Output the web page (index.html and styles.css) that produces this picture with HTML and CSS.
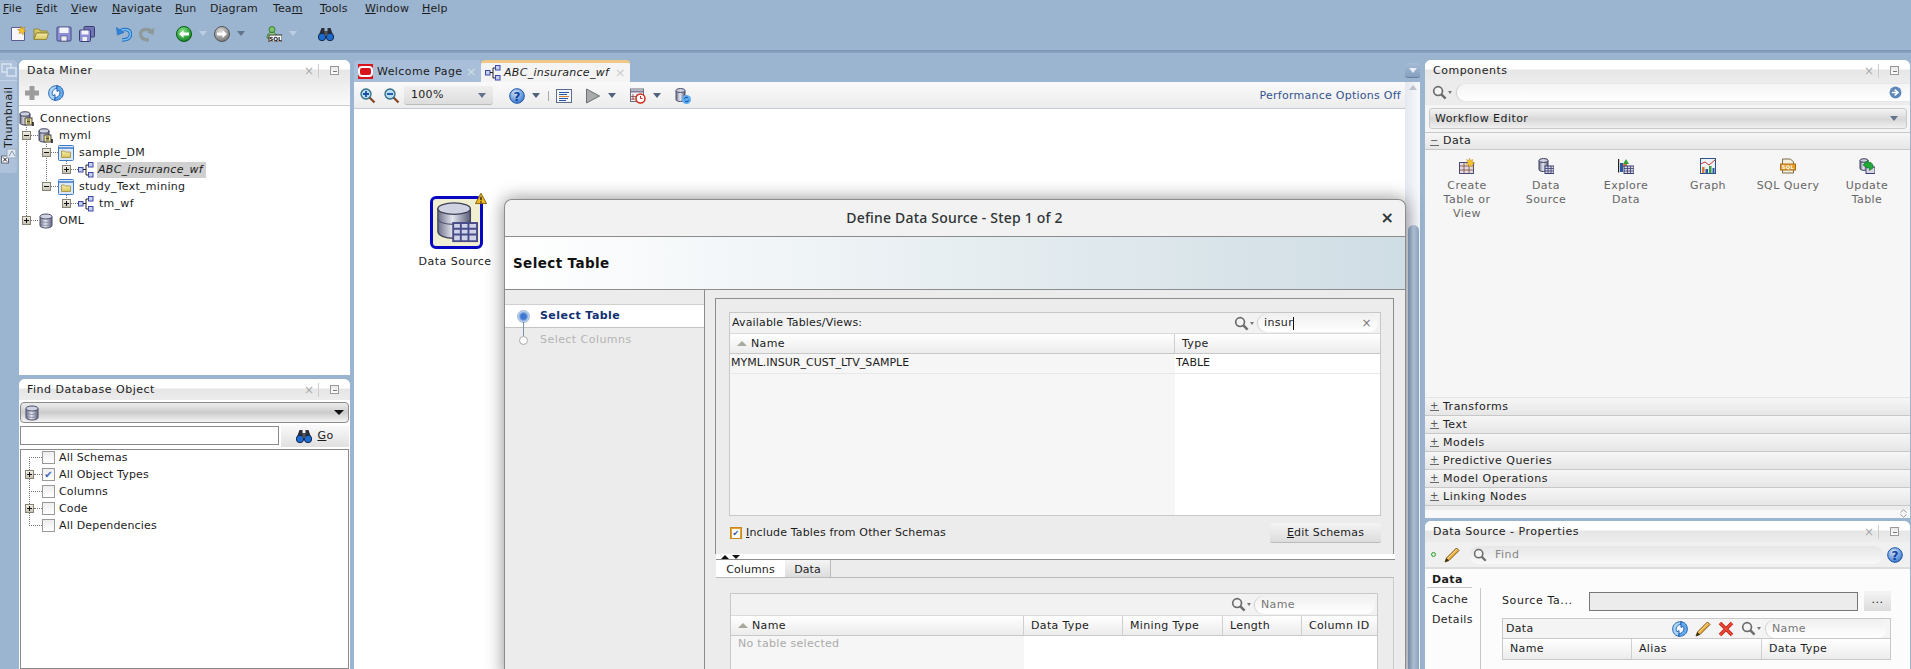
FILE: index.html
```html
<!DOCTYPE html>
<html lang="en">
<head>
<meta charset="utf-8">
<title>Oracle SQL Developer - Data Miner</title>
<link rel="stylesheet" href="styles.css">
</head>
<body>
<svg class="sprite" xmlns="http://www.w3.org/2000/svg">
  <defs>
    <linearGradient id="gDb" x1="0" x2="1" y1="0" y2="0"><stop offset="0" stop-color="#6c7088"/><stop offset=".45" stop-color="#e4e6ee"/><stop offset="1" stop-color="#5a5e78"/></linearGradient>
    <linearGradient id="gExp" x1="0" x2="0" y1="0" y2="1"><stop offset="0" stop-color="#f4f1e8"/><stop offset="1" stop-color="#c4c0b2"/></linearGradient>
    <radialGradient id="gGreen" cx=".4" cy=".3" r=".8"><stop offset="0" stop-color="#7fe07f"/><stop offset="1" stop-color="#0a7a1c"/></radialGradient>
    <radialGradient id="gGrey" cx=".4" cy=".3" r=".8"><stop offset="0" stop-color="#d8d8d8"/><stop offset="1" stop-color="#6c6c6c"/></radialGradient>
    <radialGradient id="gBlue" cx=".4" cy=".3" r=".8"><stop offset="0" stop-color="#cfe4fa"/><stop offset="1" stop-color="#2a6cc8"/></radialGradient>
    <linearGradient id="gFolder" x1="0" x2="0" y1="0" y2="1"><stop offset="0" stop-color="#f6ecaa"/><stop offset="1" stop-color="#d8c45c"/></linearGradient>
  </defs>
  <symbol id="db" viewBox="0 0 16 16"><path d="M2 3.500v9c0 1.600 2.700 2.500 6 2.500s6-.9 6-2.500v-9z" fill="url(#gDb)" stroke="#4a4e6c"/><ellipse cx="8" cy="3.500" rx="6" ry="2.500" fill="#cfd2e0" stroke="#4a4e6c"/><path d="M2 7c0 1.500 2.700 2.400 6 2.400S14 8.500 14 7M2 10c0 1.500 2.700 2.400 6 2.400s6-.9 6-2.400" fill="none" stroke="#7a7e98" stroke-width=".7"/></symbol>
  <symbol id="conn" viewBox="0 0 16 16"><path d="M1 3v9c0 1.300 2.200 2 5 2s5-.7 5-2V3z" fill="url(#gDb)" stroke="#3a3e58"/><ellipse cx="6" cy="3" rx="5" ry="2.200" fill="#cfd2e0" stroke="#3a3e58"/><rect x="6" y="7" width="7" height="7" fill="#efe39a" stroke="#444"/><path d="M8 9h3M8 10.500h3M8 12h3" stroke="#222" stroke-width=".8"/><path d="M14 11v4" stroke="#111" stroke-width="1.500"/></symbol>
  <symbol id="foldbox" viewBox="0 0 16 16"><rect x=".5" y=".5" width="15" height="15" rx="1" fill="#dce8f8" stroke="#3f7cc8"/><path d="M.5 3h15" stroke="#3f7cc8" stroke-width="1.400"/><path d="M3.500 6h3l1 1h5v5.500h-9z" fill="url(#gFolder)" stroke="#9a8c3c" stroke-width=".8"/></symbol>
  <symbol id="wf" viewBox="0 0 16 16"><rect x=".5" y="5.500" width="4.500" height="4.500" fill="#c4d0f0" stroke="#4048a8"/><path d="M5 7.500h3M8 3v10M8 3h3M8 13h3" fill="none" stroke="#222"/><rect x="10.500" y=".5" width="4.500" height="4.500" fill="#c4d0f0" stroke="#4048a8"/><rect x="10.500" y="10.500" width="4.500" height="4.500" fill="#c4d0f0" stroke="#4048a8"/></symbol>
  <symbol id="plus" viewBox="0 0 9 9"><rect x=".5" y=".5" width="8" height="8" fill="url(#gExp)" stroke="#858276"/><path d="M2 4.500h5M4.500 2v5" stroke="#111"/></symbol>
  <symbol id="minus" viewBox="0 0 9 9"><rect x=".5" y=".5" width="8" height="8" fill="url(#gExp)" stroke="#858276"/><path d="M2 4.500h5" stroke="#111"/></symbol>
  <symbol id="new" viewBox="0 0 16 16"><path d="M1.500 1.500h10l3 3v10h-13z" fill="#f6f6fb" stroke="#5c5c90"/><path d="M11 0l1 2.500L15 1l-1.200 3L16 5.500l-2.700.7L13 9l-1.700-2.300L9 7.500l1-2.500L7.500 3.500 10.300 3z" fill="#f4c430" stroke="#b07a10" stroke-width=".5"/></symbol>
  <symbol id="open" viewBox="0 0 16 16"><path d="M1 3h5l1.500 2H14v2H3.500L1 13z" fill="#d8c860" stroke="#94883c"/><path d="M3.500 7H15.500L13.500 13.500H1z" fill="url(#gFolder)" stroke="#94883c"/></symbol>
  <symbol id="save" viewBox="0 0 16 16"><rect x="1" y="1" width="14" height="14" rx="1" fill="#8c90d4" stroke="#44487c"/><rect x="3.500" y="1.500" width="9" height="5.500" fill="#f4f4fa"/><rect x="5" y="10" width="6" height="5" fill="#f0f0f0" stroke="#44487c" stroke-width=".6"/></symbol>
  <symbol id="saveall" viewBox="0 0 16 16"><rect x="5" y="0.500" width="10.500" height="10.500" rx="1" fill="#7074b4" stroke="#3c4070"/><rect x="0.500" y="4" width="11" height="11.500" rx="1" fill="#8c90d4" stroke="#3c4070"/><rect x="2.500" y="4.500" width="7" height="4" fill="#f4f4fa"/><rect x="3.500" y="11" width="4.500" height="4" fill="#f0f0f0"/></symbol>
  <symbol id="undo" viewBox="0 0 16 16"><path d="M6 14c5 0 8.500-2 8.500-6S10 2.500 6 4L3.800 5.500" fill="none" stroke="#1c6cc0" stroke-width="3.400"/><path d="M6 14c5 0 8.500-2 8.500-6S10 2.500 6 4L3.800 5.500" fill="none" stroke="#7cc0f4" stroke-width="1.500"/><path d="M.5 1.500l1 7.500 6.500-2.500z" fill="#2f84d8" stroke="#1c6cc0" stroke-width=".6"/></symbol>
  <symbol id="redo" viewBox="0 0 16 16"><path d="M10 14C5 14 1.500 12 1.500 8S6 2.500 10 4l2.200 1.500" fill="none" stroke="#8e9a9a" stroke-width="3.400"/><path d="M15.500 1.500l-1 7.500L8 6.500z" fill="#8e9a9a"/></symbol>
  <symbol id="back" viewBox="0 0 16 16"><circle cx="8" cy="8" r="7.500" fill="url(#gGreen)" stroke="#0a5c14"/><path d="M3 8l4.500-4v2.500H13v3H7.500V12z" fill="#fff"/></symbol>
  <symbol id="fwd" viewBox="0 0 16 16"><circle cx="8" cy="8" r="7.500" fill="url(#gGrey)" stroke="#555"/><path d="M13 8L8.500 4v2.500H3v3h5.500V12z" fill="#fff"/></symbol>
  <symbol id="sqlp" viewBox="0 0 16 16"><circle cx="6" cy="3.500" r="3" fill="#7cc46c" stroke="#3c7c34"/><path d="M1 12c0-4 2-5.500 5-5.500s5 1.500 5 5.500z" fill="#9cd48c" stroke="#3c7c34"/><rect x="3" y="9" width="13" height="7" fill="#fff" stroke="#333"/></symbol>
  <symbol id="binoc" viewBox="0 0 16 16"><path d="M3.500 2h3v3h3V2h3l2.500 7H.9z" fill="#2a2e38"/><circle cx="4" cy="11" r="3.700" fill="#1c6cd0" stroke="#14284c"/><circle cx="12" cy="11" r="3.700" fill="#1c6cd0" stroke="#14284c"/><path d="M6.500 5h3v5h-3z" fill="#50545c"/></symbol>
  <symbol id="zin" viewBox="0 0 16 16"><path d="M9.500 9.500l5 5" stroke="#8a4c30" stroke-width="2.400"/><circle cx="6" cy="6" r="5" fill="#bcdcf0" stroke="#2a6c84" stroke-width="1.300"/><path d="M3 6h6M6 3v6" stroke="#1850a8" stroke-width="1.800"/></symbol>
  <symbol id="zout" viewBox="0 0 16 16"><path d="M9.500 9.500l5 5" stroke="#8a4c30" stroke-width="2.400"/><circle cx="6" cy="6" r="5" fill="#bcdcf0" stroke="#2a6c84" stroke-width="1.300"/><path d="M3 6h6" stroke="#1850a8" stroke-width="1.800"/></symbol>
  <symbol id="helpc" viewBox="0 0 16 16"><circle cx="8" cy="8" r="7.300" fill="url(#gBlue)" stroke="#1c54a8"/></symbol>
  <symbol id="list" viewBox="0 0 16 16"><rect x=".5" y="1.500" width="15" height="13" fill="#f4f6fa" stroke="#5c6c90"/><path d="M3 4.500h10M3 6.500h8" stroke="#2858a8"/><path d="M3 8.500h10" stroke="#d87c2c"/><path d="M3 10.500h9M3 12.500h7" stroke="#2858a8"/></symbol>
  <symbol id="play" viewBox="0 0 16 16"><path d="M1.500 1l13 7-13 7z" fill="#a8acac" stroke="#6c7070"/></symbol>
  <symbol id="sched" viewBox="0 0 16 16"><rect x=".5" y="1" width="13" height="12.500" fill="#f0f0f4" stroke="#6c6c7c"/><path d="M.5 3.500h13" stroke="#7c7c98" stroke-width="2"/><path d="M3 6v6M7 6v6M1 8.500h6M1 11h6" stroke="#7c2c2c" stroke-width=".7"/><circle cx="10.500" cy="10.500" r="4.500" fill="#fff" stroke="#d02c1c" stroke-width="1.500"/><path d="M10.500 8v2.500h2" stroke="#c02c1c" fill="none"/></symbol>
  <symbol id="dbref" viewBox="0 0 16 16"><path d="M1 2.500v9c0 1.300 2 2 4.500 2s4.500-.7 4.500-2v-9z" fill="url(#gDb)" stroke="#4a4e6c"/><ellipse cx="5.500" cy="2.500" rx="4.500" ry="2" fill="#cfd2e0" stroke="#4a4e6c"/><circle cx="11.500" cy="11.500" r="4.500" fill="#5cacf0"/><path d="M9.500 11a2 2 0 0 1 3.600-1M13.500 12a2 2 0 0 1-3.600 1" fill="none" stroke="#134c9c"/></symbol>
  <symbol id="refresh" viewBox="0 0 16 16"><rect x="4.500" y="2.500" width="7" height="11" rx="2" fill="#f4f8fc" stroke="#c4d4e4" stroke-width=".7"/><path d="M9 .7C4 .7.7 3.400.7 8c0 2.700 1 4.800 3 6.200l3.300 1.300V9.500L5 10.800 4.300 9.500C3.700 6.800 5.500 3.600 9 3.300z" fill="#a8d4f8" stroke="#1c58ac" stroke-width=".9"/><path d="M7 15.300c5 0 8.300-2.700 8.300-7.300 0-2.700-1-4.800-3-6.200L9 .5v6l2-1.300.7 1.300c.6 2.700-1.200 5.900-4.700 6.200z" fill="#64acee" stroke="#1c58ac" stroke-width=".9"/></symbol>
  <symbol id="pencil" viewBox="0 0 16 16"><path d="M12.500 1L15 3.500 5 13.500 1 15l1.500-4z" fill="#f0b040" stroke="#7c5414"/><path d="M1 15l1.500-4 2.500 2.500z" fill="#332"/><path d="M3.500 11.500L13 2" stroke="#fce090"/></symbol>
  <symbol id="xred" viewBox="0 0 16 16"><path d="M2 2l12 12M14 2L2 14" stroke="#c8281c" stroke-width="3.600"/><path d="M2 2l12 12M14 2L2 14" stroke="#f0503c" stroke-width="1.400"/></symbol>
  <symbol id="mag" viewBox="0 0 16 16"><circle cx="6.500" cy="6.500" r="4.700" fill="#f4f4f4" stroke="#6c6c6c" stroke-width="1.800"/><path d="M10 10l4.500 4.500" stroke="#6c6c6c" stroke-width="2.600"/></symbol>
  <symbol id="go" viewBox="0 0 16 16"><circle cx="8" cy="8" r="7.300" fill="#5c88bc"/><path d="M3.500 8h6M7 4.500L11 8l-4 3.500" fill="none" stroke="#fff" stroke-width="2"/></symbol>
  <symbol id="addg" viewBox="0 0 16 16"><path d="M5.500 1h5v4.500H15v5h-4.500V15h-5v-4.500H1v-5h4.500z" fill="#9c9c9c"/></symbol>
  <symbol id="crt" viewBox="0 0 16 16"><rect x=".5" y="4.500" width="14" height="11" fill="#e4dcdc" stroke="#4a4c80"/><path d="M.5 8h14M.5 12h14M5 4.500v11M10 4.500v11" stroke="#7c4444" stroke-width=".8"/><path d="M10.500 0l1 2.500L14 1.500l-.8 2.500 2.800 1-2.800 1 .8 3-2.500-1.500L10 9 9.700 6.500 7 6l2-1.500-1.500-3 2.500 1z" fill="#f4c430" stroke="#c08c18" stroke-width=".4"/></symbol>
  <symbol id="dsp" viewBox="0 0 16 16"><path d="M1 2.500v9c0 1.300 2 2 4.500 2s4.500-.7 4.500-2v-9z" fill="url(#gDb)" stroke="#3a3e58"/><ellipse cx="5.500" cy="2.500" rx="4.500" ry="2" fill="#cfd2e0" stroke="#3a3e58"/><rect x="7" y="8" width="9" height="7.500" fill="#d8d8e4" stroke="#3a3c70"/><path d="M7 10.500h9M7 13h9M10 8v7.500M13 8v7.500" stroke="#3a3c70" stroke-width=".8"/></symbol>
  <symbol id="expl" viewBox="0 0 16 16"><path d="M.5 1v13.500" stroke="#222" stroke-width="1.400"/><rect x="2" y="5" width="3" height="9" fill="#2858a8"/><path d="M5 6l3-5 3 5z" fill="#38a038"/><rect x="5" y="6" width="4" height="3" fill="#d87c2c"/><rect x="6" y="8" width="10" height="7.500" fill="#d8d8e4" stroke="#3a3c70"/><path d="M6 10.500h10M6 13h10M9.500 8v7.500M12.500 8v7.500" stroke="#3a3c70" stroke-width=".8"/></symbol>
  <symbol id="graph" viewBox="0 0 16 16"><rect x=".5" y=".5" width="15" height="15" fill="#eef2f8" stroke="#2c5488"/><path d="M.5 6L5 4l4 3 6-5" fill="none" stroke="#c83828"/><rect x="2" y="9" width="2.500" height="6" fill="#d87c2c"/><rect x="5.500" y="11" width="2.500" height="4" fill="#2858a8"/><rect x="9" y="8" width="2.500" height="7" fill="#38a048"/><rect x="12.500" y="10" width="2" height="5" fill="#2858a8"/></symbol>
  <symbol id="sqlq" viewBox="0 0 16 16"><path d="M2.500 1h8l3 3v11h-11z" fill="#f4f0e0" stroke="#7c6c4c"/><rect x="0.500" y="6" width="15" height="6" fill="#e89c28" stroke="#b06c14"/></symbol>
  <symbol id="upd" viewBox="0 0 16 16"><path d="M1 2.500v8c0 1.200 1.800 1.800 4 1.800s4-.6 4-1.800v-8z" fill="url(#gDb)" stroke="#3a3e58"/><ellipse cx="5" cy="2.500" rx="4" ry="1.800" fill="#cfd2e0" stroke="#3a3e58"/><rect x="7" y="9" width="9" height="6.500" fill="#d8d8e4" stroke="#3a3c70"/><path d="M4 7l5-5v2.500h3L14 7v3l-3.500 2.500V10H8z" fill="#20a838" stroke="#0c6c1c" stroke-width=".6"/></symbol>
  <symbol id="thumbA" viewBox="0 0 16 16"><rect x="1" y="2" width="9" height="8" fill="none" stroke="#d8e4f0" stroke-width="1.500"/><rect x="6" y="6" width="9" height="8" fill="#a8bed8" stroke="#d8e4f0" stroke-width="1.500"/></symbol>
  <symbol id="thumbB" viewBox="0 0 16 16"><rect x=".5" y="8" width="7" height="7" fill="#fff" stroke="#667"/><path d="M2 9.500l4 4M6 9.500l-4 4" stroke="#111"/><rect x="6" y="1" width="9" height="9" fill="#dfe8f2" stroke="#9ab"/><path d="M8 8l3-5 3 5" fill="none" stroke="#89a"/></symbol>
  <symbol id="node" viewBox="0 0 44 44"><path d="M2 7v24c0 4 7 7 17 7s17-3 17-7V7z" fill="url(#gDb)" stroke="#3e4058" stroke-width="1.400"/><ellipse cx="19" cy="7" rx="17" ry="6" fill="#cfd2e0" stroke="#3e4058" stroke-width="1.400"/><path d="M2 17c0 4 7 6.500 17 6.500S36 21 36 17" fill="none" stroke="#50546c" stroke-width="1.200"/><rect x="17" y="21" width="27" height="21" fill="#484c88"/><path d="M19 23h6v4h-6zM27 23h6v4h-6zM35 23h7v4h-7zM19 29h6v4h-6zM27 29h6v4h-6zM35 29h7v4h-7zM19 35h6v5h-6zM27 35h6v5h-6zM35 35h7v5h-7z" fill="#d0d2e8"/></symbol>
  <symbol id="warn" viewBox="0 0 13 13"><path d="M6.500.8L12.500 12H.5z" fill="#f4b820" stroke="#7c5c10"/><path d="M6.500 4.500v4M6.500 9.500v1.500" stroke="#222" stroke-width="1.500"/></symbol>
</svg>

<nav class="menubar">
  <span class="mi"><u>F</u>ile</span><span class="mi"><u>E</u>dit</span><span class="mi"><u>V</u>iew</span><span class="mi"><u>N</u>avigate</span><span class="mi"><u>R</u>un</span><span class="mi">D<u>i</u>agram</span><span class="mi">Tea<u>m</u></span><span class="mi"><u>T</u>ools</span><span class="mi"><u>W</u>indow</span><span class="mi"><u>H</u>elp</span>
</nav>
<div class="maintools">
  <svg class="ic"><use href="#new"/></svg>
  <svg class="ic"><use href="#open"/></svg>
  <svg class="ic"><use href="#save"/></svg>
  <svg class="ic"><use href="#saveall"/></svg>
  <svg class="ic gapl"><use href="#undo"/></svg>
  <svg class="ic"><use href="#redo"/></svg>
  <svg class="ic gapl"><use href="#back"/></svg>
  <i class="tri tri-lite"></i>
  <svg class="ic"><use href="#fwd"/></svg>
  <i class="tri tri-mid"></i>
  <svg class="ic gapl" viewBox="0 0 16 16"><use href="#sqlp"/><text x="9.500" y="14.800" class="svgsql">SQL</text></svg>
  <i class="tri tri-lite"></i>
  <svg class="ic gapl"><use href="#binoc"/></svg>
</div>
<div class="hdiv"></div>

<main class="main">
  <aside class="strip">
    <div class="strip-top"><svg class="ic"><use href="#thumbA"/></svg></div>
    <div class="strip-label">Thumbnail</div>
    <svg class="ic"><use href="#thumbB"/></svg>
  </aside>

  <div class="leftcol">
    <section class="panel dm">
      <header class="phead"><span class="ptitle">Data Miner</span><span class="px">×</span><span class="psep"></span><span class="pmin"></span></header>
      <div class="dmtools"><svg class="ic"><use href="#addg"/></svg><svg class="ic"><use href="#refresh"/></svg></div>
      <div class="tree">
        <div class="row"><svg class="ic"><use href="#conn"/></svg><span class="lbl">Connections</span></div>
        <div class="branch b1">
          <div class="row"><svg class="exp"><use href="#minus"/></svg><i class="dash"></i><svg class="ic"><use href="#conn"/></svg><span class="lbl">myml</span></div>
          <div class="branch b2">
            <div class="row"><svg class="exp"><use href="#minus"/></svg><i class="dash"></i><svg class="ic"><use href="#foldbox"/></svg><span class="lbl">sample_DM</span></div>
            <div class="branch b3">
              <div class="row"><svg class="exp"><use href="#plus"/></svg><i class="dash"></i><svg class="ic"><use href="#wf"/></svg><span class="lbl sel">ABC_insurance_wf</span></div>
            </div>
            <div class="row"><svg class="exp"><use href="#minus"/></svg><i class="dash"></i><svg class="ic"><use href="#foldbox"/></svg><span class="lbl">study_Text_mining</span></div>
            <div class="branch b3">
              <div class="row"><svg class="exp"><use href="#plus"/></svg><i class="dash"></i><svg class="ic"><use href="#wf"/></svg><span class="lbl">tm_wf</span></div>
            </div>
          </div>
          <div class="row"><svg class="exp"><use href="#plus"/></svg><i class="dash"></i><svg class="ic"><use href="#db"/></svg><span class="lbl">OML</span></div>
        </div>
      </div>
    </section>

    <section class="panel find">
      <header class="phead"><span class="ptitle">Find Database Object</span><span class="px">×</span><span class="psep"></span><span class="pmin"></span></header>
      <div class="combo"><svg class="ic"><use href="#db"/></svg><i class="tri tri-black"></i></div>
      <div class="findrow"><div class="findinput"></div><div class="gobtn"><svg class="ic"><use href="#binoc"/></svg><span><u>G</u>o</span></div></div>
      <div class="findtree">
        <div class="branch fb">
          <div class="row"><i class="nodash"></i><i class="cb"></i><span class="lbl">All Schemas</span></div>
          <div class="row"><svg class="exp"><use href="#plus"/></svg><i class="dash dash-s"></i><i class="cb on"></i><span class="lbl">All Object Types</span></div>
          <div class="row"><i class="nodash"></i><i class="cb"></i><span class="lbl">Columns</span></div>
          <div class="row"><svg class="exp"><use href="#plus"/></svg><i class="dash dash-s"></i><i class="cb"></i><span class="lbl">Code</span></div>
          <div class="row"><i class="nodash"></i><i class="cb"></i><span class="lbl">All Dependencies</span></div>
        </div>
      </div>
    </section>
  </div>

  <div class="center">
    <div class="tabs">
      <div class="tab"><span class="orcl"></span><span class="tabtxt">Welcome Page</span><span class="tabx">×</span></div>
      <div class="tab active"><svg class="ic"><use href="#wf"/></svg><span class="tabtxt it">ABC_insurance_wf</span><span class="tabx">×</span></div>
    </div>
    <div class="edtools">
      <svg class="ic"><use href="#zin"/></svg>
      <svg class="ic zo"><use href="#zout"/></svg>
      <div class="zoomcombo"><span>100%</span><i class="tri tri-mid"></i></div>
      <svg class="ic" viewBox="0 0 16 16"><use href="#helpc"/><text x="8" y="12.500" class="svghelp">?</text></svg><i class="tri tri-dark"></i>
      <i class="vsep"></i>
      <svg class="ic"><use href="#list"/></svg>
      <svg class="ic pl"><use href="#play"/></svg><i class="tri tri-dark"></i>
      <svg class="ic sc"><use href="#sched"/></svg><i class="tri tri-dark"></i>
      <svg class="ic sc"><use href="#dbref"/></svg>
      <span class="perf">Performance Options Off</span>
    </div>
    <div class="canvas">
      <div class="wnode">
        <div class="nodebox"><svg class="nodeic"><use href="#node"/></svg></div>
        <svg class="warn"><use href="#warn"/></svg>
        <div class="nodelbl">Data Source</div>
      </div>

      <div class="dialog">
        <div class="dtitle"><span class="dtitletxt">Define Data Source - Step 1 of 2</span><span class="dclose">×</span></div>
        <div class="dhead">Select Table</div>
        <div class="dbody">
          <div class="train">
            <div class="stop cur"><i class="dot"></i><span>Select Table</span></div>
            <div class="stop"><i class="dot off"></i><span>Select Columns</span></div>
          </div>
          <div class="dmain">
            <div class="upper">
              <div class="tbl t1">
                <div class="tbar"><span>Available Tables/Views:</span><span class="fsearch"><svg class="ic mg"><use href="#mag"/></svg><i class="tri tri-tiny"></i><span class="pill p120">insur<b class="caret"></b><span class="pillx">×</span></span></span></div>
                <div class="thead h2"><div class="th"><i class="sorta"></i>Name</div><div class="th">Type</div></div>
                <div class="tgrid">
                  <div class="gleft"><div class="cell">MYML.INSUR_CUST_LTV_SAMPLE</div></div>
                  <div class="gright"><div class="cell">TABLE</div></div>
                </div>
              </div>
              <div class="chkrow">
                <i class="cb2"></i><span><u>I</u>nclude Tables from Other Schemas</span>
                <div class="btn"><u>E</u>dit Schemas</div>
              </div>
            </div>
            <div class="sash"><i class="up"></i><i class="dn"></i></div>
            <div class="lower">
              <div class="ltabs"><div class="ltab on">Columns</div><div class="ltab">Data</div></div>
              <div class="lpane">
                <div class="tbl t2">
                  <div class="tbar endbar"><span class="fsearch"><svg class="ic mg"><use href="#mag"/></svg><i class="tri tri-tiny"></i><span class="pill p120 ph">Name</span></span></div>
                  <div class="thead h5"><div class="th"><i class="sorta"></i>Name</div><div class="th">Data Type</div><div class="th">Mining Type</div><div class="th">Length</div><div class="th">Column ID</div></div>
                  <div class="g5"><div class="gleft"><div class="empty">No table selected</div></div><div class="gright"></div></div>
                </div>
              </div>
            </div>
          </div>
        </div>
      </div>
    </div>
  </div>

  <div class="vscroll">
    <div class="viewbtn"><i class="tri tri-white"></i></div>
    <div class="sbar"><i class="sup"></i><div class="sthumb"></div></div>
  </div>

  <div class="rightcol">
    <section class="panel comps">
      <header class="phead"><span class="ptitle">Components</span><span class="px">×</span><span class="psep"></span><span class="pmin"></span></header>
      <div class="csearch"><svg class="ic mg"><use href="#mag"/></svg><i class="tri tri-tiny"></i><span class="pill cpill"><svg class="ic"><use href="#go"/></svg></span></div>
      <div class="wfcombo"><span>Workflow Editor</span><i class="tri tri-mid"></i></div>
      <div class="acc first"><i class="accic">−</i>Data</div>
      <div class="palette">
        <div class="pal"><svg class="ic"><use href="#crt"/></svg><span>Create<br>Table or<br>View</span></div>
        <div class="pal"><svg class="ic"><use href="#dsp"/></svg><span>Data<br>Source</span></div>
        <div class="pal"><svg class="ic"><use href="#expl"/></svg><span>Explore<br>Data</span></div>
        <div class="pal"><svg class="ic"><use href="#graph"/></svg><span>Graph</span></div>
        <div class="pal"><svg class="ic" viewBox="0 0 16 16"><use href="#sqlq"/><text x="8" y="11" class="svgsqlq">SQL</text></svg><span>SQL Query</span></div>
        <div class="pal"><svg class="ic"><use href="#upd"/></svg><span>Update<br>Table</span></div>
      </div>
      <div class="acc"><i class="accic">+</i>Transforms</div>
      <div class="acc"><i class="accic">+</i>Text</div>
      <div class="acc"><i class="accic">+</i>Models</div>
      <div class="acc"><i class="accic">+</i>Predictive Queries</div>
      <div class="acc"><i class="accic">+</i>Model Operations</div>
      <div class="acc"><i class="accic">+</i>Linking Nodes</div>
      <div class="accend"><svg class="chev" viewBox="0 0 7 9"><path d="M.5 3.500L3.500 .8l3 2.700M.5 5.500l3 2.700 3-2.700" fill="none" stroke="#999"/></svg></div>
    </section>

    <section class="panel props">
      <header class="phead"><span class="ptitle">Data Source - Properties</span><span class="px">×</span><span class="psep"></span><span class="pmin"></span></header>
      <div class="ptools">
        <i class="gdot"></i>
        <svg class="ic pen"><use href="#pencil"/></svg>
        <div class="findpill"><svg class="ic"><use href="#mag"/></svg><span>Find</span></div>
        <svg class="ic" viewBox="0 0 16 16"><use href="#helpc"/><text x="8" y="12.500" class="svghelp">?</text></svg>
      </div>
      <div class="pbody">
        <div class="side">
          <div class="stab on">Data</div>
          <div class="srest"><div class="stab">Cache</div><div class="stab">Details</div></div>
        </div>
        <div class="pcontent">
          <div class="srcrow"><span class="srclbl">Source Ta...</span><div class="srcinput"></div><div class="dots">...</div></div>
          <div class="ptbl">
            <div class="ptbar"><span class="ptname">Data</span><svg class="ic"><use href="#refresh"/></svg><svg class="ic"><use href="#pencil"/></svg><svg class="ic"><use href="#xred"/></svg><svg class="ic mg"><use href="#mag"/></svg><i class="tri tri-tiny"></i><span class="pill p121 ph">Name</span></div>
            <div class="thead h3"><div class="th">Name</div><div class="th">Alias</div><div class="th">Data Type</div></div>
          </div>
        </div>
      </div>
    </section>
  </div>
</main>
</body>
</html>
```

FILE: styles.css
```css
* { box-sizing: border-box; }
html, body { margin: 0; padding: 0; }
body {
  width: 1911px; height: 669px; overflow: hidden;
  background: #9bb4cf;
  font: 11px/14px "DejaVu Sans", sans-serif;
  color: #1c1c1c;
  display: flex; flex-direction: column;
}
i { font-style: normal; display: block; flex: none; }
svg { display: block; flex: none; }
.sprite { width: 0; height: 0; }
.ic { width: 16px; height: 16px; }
.svgsql { font: 700 5.6px "DejaVu Sans", sans-serif; text-anchor: middle; fill: #111; }
.svgsqlq { font: 700 5px "DejaVu Sans", sans-serif; text-anchor: middle; fill: #fff; }
.svghelp { font: 700 12px "DejaVu Sans", sans-serif; text-anchor: middle; fill: #12409c; }

.tri { width: 0; height: 0; border-left: 4.5px solid transparent; border-right: 4.5px solid transparent; border-top: 5px solid #6c7c90; }
.tri-lite { border-top-color: #bccde2; }
.tri-mid { border-top-color: #64748c; }
.tri-dark { border-top-color: #50627e; }
.tri-black { border-top-color: #111; border-left-width: 5px; border-right-width: 5px; }
.tri-white { border-top-color: #e6eef8; }
.tri-tiny { border-left-width: 2.5px; border-right-width: 2.5px; border-top: 3px solid #777; }

/* top */
.menubar { height: 20px; flex: none; display: grid; grid-template-columns: 33px 35px 41px 63px 35px 63px 47px 45px 57px auto; align-items: center; padding: 0 0 2px 3px; letter-spacing: .1px; white-space: nowrap; }
.maintools { height: 30px; flex: none; display: flex; align-items: center; padding: 0 0 3px 10px; gap: 7px; }
.gapl { margin-left: 14px; }
.hdiv { height: 3px; flex: none; background: linear-gradient(#7a94b4, #8aa4c2); }

.main { flex: 1; min-height: 0; display: flex; padding-top: 7px; overflow: hidden; }

/* thumbnail strip */
.strip { width: 17px; height: 113px; margin-right: 2px; background: #adc2da; border-radius: 0 4px 4px 0; display: flex; flex-direction: column; align-items: center; flex: none; }
.strip-top { height: 21px; width: 100%; flex: none; display: flex; align-items: center; justify-content: center; border-bottom: 1px solid #c4d3e6; }
.strip-label { writing-mode: vertical-rl; transform: rotate(180deg); margin-top: 9px; height: 58px; flex: none; line-height: 14px; text-align: left; letter-spacing: .35px; }

/* panels */
.leftcol { width: 331px; flex: none; display: flex; flex-direction: column; gap: 4px; }
.panel { background: #fff; border-radius: 6px 6px 0 0; overflow: hidden; display: flex; flex-direction: column; }
.phead { height: 21px; flex: none; display: flex; align-items: center; padding: 0 11px 0 8px; background: linear-gradient(#fff 0, #fff 9px, #e6e6e6 10px, #ececec 100%); }
.ptitle { flex: 1; letter-spacing: .5px; }
.px { color: #aaa; font-size: 12px; width: 14px; text-align: center; }
.psep { width: 1px; height: 14px; background: #ccc; margin: 0 11px 0 2px; }
.pmin { width: 9px; height: 9px; border: 1px solid #999; background: linear-gradient(#e8e8e8, #fff); }
.pmin::after { content: ""; display: block; margin: 4px 1.5px 0; height: 1px; background: #777; }

.dm { height: 315px; flex: none; }
.dmtools { height: 25px; flex: none; display: flex; align-items: center; gap: 8px; padding: 0 0 0 5px; background: linear-gradient(#ececec, #fafafa); border-bottom: 1px solid #ccc; }
.tree { padding-top: 4px; }
.row { height: 17px; display: flex; align-items: center; }
.lbl { margin-left: 4px; letter-spacing: .15px; white-space: nowrap; }
.tree .lbl { margin-left: 5px; letter-spacing: .28px; }
.exp { width: 9px; height: 9px; margin-left: -4px; }
.dash { width: 7px; height: 0; border-top: 1px dotted #777; }
.dash-s { width: 8px; }
.nodash { width: 13px; height: 0; border-top: 1px dotted #777; }
.branch { background-image: repeating-linear-gradient(to bottom, #777 0 1px, transparent 1px 2px); background-repeat: no-repeat; }
.b1 { margin-left: 7px; background-size: 1px calc(100% - 8px); }
.b2 { margin-left: 20px; background-size: 1px calc(100% - 25px); }
.b3 { margin-left: 20px; background-size: 1px 9px; }
.tree .sel { background: #d0d0d0; font-style: italic; padding: 0 3px 0 1px; height: 16px; margin-left: 3px; line-height: 16px; }

/* find */
.find { flex: 1; min-height: 0; padding: 0 1px; }
.find .phead { margin: 0 -1px; }
.combo { height: 21px; flex: none; margin-top: 2px; border: 1px solid #8a8a8a; border-radius: 4px; display: flex; align-items: center; justify-content: space-between; padding: 0 4px 0 3px; background: linear-gradient(#ececec, #ccc 50%, #f4f4f4); }
.findrow { height: 20px; flex: none; margin-top: 3px; display: flex; gap: 2px; }
.findinput { width: 259px; height: 19px; border: 1px solid #8a8a8a; background: #fff; }
.gobtn { flex: 1; height: 22px; margin-top: -1px; display: flex; align-items: center; justify-content: center; gap: 5px; background: linear-gradient(#fafafa, #e0e0e0); letter-spacing: .4px; }
.findtree { flex: 1; margin-top: 3px; border: 1px solid #8a8a8a; padding: 0 0 0 8px; }
.findtree .branch { background-size: 1px 68px; background-position: 0 8px; }
.fb { margin-top: -1px; }
.cb { width: 13px; height: 13px; border: 1px solid #999; background: linear-gradient(#eee, #fff); }
.cb.on::after { content: "✔"; display: block; font-size: 10px; line-height: 11px; text-align: center; color: #3c66b8; }

/* center */
.center { width: 1051px; flex: none; margin-left: 4px; display: flex; flex-direction: column; position: relative; z-index: 2; }
.tabs { height: 22px; flex: none; display: flex; }
.tab { display: flex; align-items: center; background: #a9bfd9; border-radius: 4px 4px 0 0; padding: 1px 4px 0; letter-spacing: .42px; }
.tab:first-child { width: 127px; }
.tab.active { width: 149px; background: #f4f4f4; border-top: 3px solid #edc985; padding-top: 0; }
.tabtxt { margin-left: 4px; flex: 1; white-space: nowrap; }
.it { font-style: italic; letter-spacing: .3px; margin-left: 3px; }
.tabx { color: #cfdbe8; font-size: 13px; }
.active .tabx { color: #ccc; }
.orcl { width: 15px; height: 15px; background: #d8141c; display: flex; align-items: center; justify-content: center; flex: none; }
.orcl::before { content: ""; display: block; width: 11px; height: 7px; border: 2px solid #fff; border-radius: 4px; }

.edtools { height: 27px; flex: none; display: flex; align-items: center; padding: 1px 4px 0 6px; background: linear-gradient(#fafafa, #ececec); border-bottom: 1px solid #c4cad4; }
.zo { margin-left: 8px; }
.zoomcombo { width: 89px; height: 19px; margin: 0 16px 0 4px; padding: 0 7px; display: flex; align-items: center; justify-content: space-between; background: linear-gradient(#efefef, #ddd); border-radius: 3px; border-bottom: 1px solid #bbb; letter-spacing: .3px; }
.edtools .tri { margin-left: 7px; }
.vsep { width: 1px; height: 10px; background: #aaa; margin: 0 7px 0 8px; }
.pl { margin-left: 13px; }
.sc { margin-left: 14px; }
.perf { margin-left: auto; color: #33538f; letter-spacing: .26px; }

.canvas { flex: 1; position: relative; background: #fff; }
.wnode { position: absolute; left: 55px; top: 87px; width: 92px; text-align: center; }
.nodebox { width: 53px; height: 53px; margin-left: 21px; border: 3px solid #0606c4; border-radius: 6px; background: #f0efd2; display: flex; align-items: center; justify-content: center; }
.nodeic { width: 42px; height: 42px; }
.warn { position: absolute; left: 66px; top: -4px; width: 12px; height: 13px; }
.nodelbl { margin-top: 6px; letter-spacing: .5px; white-space: nowrap; }

/* dialog */
.dialog { position: absolute; left: 150px; top: 90px; width: 902px; height: 480px; border-radius: 8px 8px 0 0; border: 1px solid #8c8c8c; border-bottom: 0; background: #ececec; box-shadow: 0 0 18px rgba(0,0,0,.45); display: flex; flex-direction: column; }
.dtitle { height: 37px; flex: none; border-radius: 8px 8px 0 0; background: #f2f2f2; border-bottom: 1px solid #8c8c8c; display: flex; align-items: center; justify-content: center; position: relative; }
.dtitletxt { font: 500 14px/18px "Noto Sans", sans-serif; color: #2e3436; letter-spacing: .19px; margin-left: -1px; }
.dclose { position: absolute; right: 11px; top: 10px; font: 700 16px/16px "DejaVu Sans", sans-serif; color: #2e3436; }
.dhead { height: 53px; flex: none; padding-left: 8px; display: flex; align-items: center; font-weight: 700; font-size: 13.5px; letter-spacing: .4px; color: #111; background: linear-gradient(to right, #fff, #cfdde4); border-bottom: 1px solid #8c8c8c; }
.dbody { flex: 1; display: flex; min-height: 0; }
.train { width: 200px; flex: none; padding-top: 14px; border-right: 1px solid #8c8c8c; background: #ececec; }
.stop { height: 24px; display: flex; align-items: center; padding-left: 12px; gap: 10px; color: #b4b4b4; letter-spacing: .45px; }
.stop.cur { background: #fff; border-top: 1px solid #d0d0d0; border-bottom: 1px solid #c4c4c4; color: #0f2f70; font-weight: 700; }
.dot { width: 13px; height: 13px; border-radius: 50%; background: radial-gradient(#3f78d0 0 35%, #cfe0f4 70%); border: 1px solid #9cb4cc; position: relative; }
.cur .dot::after { content: ""; position: absolute; left: 5px; top: 11px; width: 1px; height: 15px; background: #7c90ac; }
.dot.off { width: 9px; height: 9px; margin: 0 2px; background: #fff; border-color: #aaa; }
.dmain { flex: 1; min-width: 0; display: flex; flex-direction: column; padding: 8px 11px 0 10px; }
.upper { height: 256px; flex: none; border: 1px solid #8c8c8c; border-width: 1px 1px 0 1px; padding: 13px 12px 0 13px; }
.tbl { border: 1px solid #c8c8c8; background: #fff; display: flex; flex-direction: column; }
.t1 { height: 204px; }
.tbar { height: 21px; flex: none; display: flex; align-items: center; justify-content: space-between; padding: 0 2px; background: #f2f2f2; border-bottom: 1px solid #dadada; letter-spacing: .15px; }
.endbar { justify-content: flex-end; height: 22px; }
.fsearch { display: flex; align-items: center; gap: 1px; }
.mg { width: 15px; height: 15px; }
.pill { height: 18px; border-radius: 9px; background: linear-gradient(#f0f0f0, #fff); display: flex; align-items: center; padding: 0 6px; letter-spacing: .35px; box-shadow: -1px 0 1px #ccc; }
.p120 { width: 120px; margin-left: 3px; }
.p121 { width: 121px; margin-left: 3px; }
.ph { color: #777; }
.caret { width: 1px; height: 13px; background: #111; }
.pillx { margin-left: auto; color: #777; font-size: 12px; }
.thead { height: 20px; flex: none; display: grid; background: linear-gradient(#fff, #ececec); border-bottom: 1px solid #c8c8c8; }
.h2 { grid-template-columns: 445px 1fr; }
.h5 { grid-template-columns: 293px 99px 100px 79px 1fr; }
.h3 { grid-template-columns: 129px 130px 1fr; height: 21px; }
.th { display: flex; align-items: center; padding-left: 7px; border-right: 1px solid #d0d0d0; letter-spacing: .35px; gap: 4px; white-space: nowrap; }
.th:last-child { border-right: 0; }
.sorta { width: 0; height: 0; border-left: 5px solid transparent; border-right: 5px solid transparent; border-bottom: 5px solid #aaa89c; }
.tgrid { flex: 1; display: grid; grid-template-columns: 445px 1fr; }
.gleft { background: #f6f6f6; }
.gright { background: #fff; }
.cell { height: 20px; line-height: 18px; padding-left: 1px; border-bottom: 1px solid #e8e8e8; background: inherit; white-space: nowrap; }
.chkrow { height: 34px; display: flex; align-items: center; gap: 4px; padding-left: 1px; letter-spacing: .15px; }
.cb2 { width: 12px; height: 12px; background: #e8a030; border: 1px solid #c88820; display: flex; align-items: center; justify-content: center; }
.cb2::after { content: "✔"; display: block; width: 8px; height: 9px; font-size: 8px; line-height: 9px; text-align: center; background: #fff; color: #2c50a8; }
.btn { margin-left: auto; width: 111px; height: 20px; display: flex; align-items: center; justify-content: center; background: linear-gradient(#f4f4f4, #dcdcdc); border-radius: 2px; border-bottom: 1px solid #bbb; letter-spacing: .2px; }
.sash { height: 6px; flex: none; background: #fff; border-bottom: 1px solid #8c8c8c; display: flex; gap: 3px; padding: 1px 0 0 5px; margin: 0 -1px 0 1px; }
.sash .up { width: 0; height: 0; border-left: 4px solid transparent; border-right: 4px solid transparent; border-bottom: 4px solid #111; }
.sash .dn { width: 0; height: 0; border-left: 4px solid transparent; border-right: 4px solid transparent; border-top: 4px solid #111; }
.lower { flex: 1; display: flex; flex-direction: column; padding-left: 1px; }
.ltabs { height: 18px; flex: none; display: flex; border-bottom: 1px solid #bbb; }
.ltab { width: 46px; padding-top: 2px; display: flex; align-items: center; justify-content: center; background: linear-gradient(#f4f4f4, #ddd); border-right: 1px solid #bbb; letter-spacing: .1px; }
.ltab.on { width: 69px; background: #fff; border-right: 0; }
.lpane { flex: 1; padding: 15px 15px 0 14px; border-right: 1px solid #c8c8c8; }
.t2 { height: 100px; }
.g5 { flex: 1; display: grid; grid-template-columns: 293px 1fr; }
.empty { color: #aaa; padding: 1px 0 0 7px; letter-spacing: .3px; }

/* scroll column */
.vscroll { width: 15px; flex: none; display: flex; flex-direction: column; z-index: 1; }
.viewbtn { height: 15px; flex: none; margin-top: 3px; background: linear-gradient(#a6bbd5, #84a0c0); border-radius: 3px; display: flex; align-items: center; justify-content: center; border-bottom: 1px solid #667e9e; }
.sbar { flex: 1; margin-top: 4px; background: linear-gradient(to right, #e4e8ef, #f8f9fb); display: flex; flex-direction: column; align-items: center; padding-top: 3px; }
.sup { width: 0; height: 0; border-left: 4px solid transparent; border-right: 4px solid transparent; border-bottom: 5px solid #bcc2cc; }
.sthumb { width: 11px; margin-top: 135px; flex: 1; border-radius: 6px 6px 0 0; background: linear-gradient(to right, #8da6c6, #bccde2 50%, #8da6c6); margin-left: 2px; }

/* right column */
.rightcol { width: 485px; flex: none; margin-left: 5px; display: flex; flex-direction: column; gap: 3px; }
.comps { height: 458px; flex: none; background: #f5f5f5; }
.csearch { height: 24px; flex: none; display: flex; align-items: center; gap: 1px; padding: 2px 0 4px 7px; background: #ececec; }
.cpill { flex: 1; margin-left: 4px; justify-content: flex-end; padding-right: 8px; border-radius: 9px 0 0 9px; background: linear-gradient(#f4f4f4, #fff); height: 17px; }
.cpill .ic { width: 13px; height: 13px; }
.wfcombo { height: 21px; flex: none; margin: 3px 3px 3px 4px; border: 1px solid #cacaca; border-radius: 3px; display: flex; align-items: center; justify-content: space-between; padding: 0 8px 0 5px; background: linear-gradient(#f4f4f4, #d8d8d8 55%, #f0f0f0); letter-spacing: .45px; }
.acc { height: 18px; flex: none; display: flex; align-items: center; padding-left: 5px; background: linear-gradient(#f6f6f6, #e6e6e6); border-bottom: 1px solid #c8c8c8; letter-spacing: .5px; gap: 4px; }
.acc.first { border-top: 1px solid #c8c8c8; }
.accic { width: 9px; height: 9px; font-size: 10px; line-height: 8px; text-align: center; border-bottom: 1px solid #666; color: #555; }
.palette { height: 248px; flex: none; display: grid; grid-template-columns: 80px 78px 82px 82px 78px 80px; align-items: start; padding: 8px 0 0 2px; background: #f6f6f6; border-bottom: 1px solid #e4e4e4; }
.pal { display: flex; flex-direction: column; align-items: center; color: #666; text-align: center; letter-spacing: .45px; }
.pal span { margin-top: 5px; display: block; }
.accend { flex: 1; display: flex; justify-content: flex-end; padding: 3px 3px 0 0; background: linear-gradient(#ececec 0 4px, #f8f8f8 4px); }
.chev { width: 7px; height: 9px; }
.props { flex: 1; min-height: 0; }
.ptools { height: 27px; flex: none; display: flex; align-items: center; padding: 1px 7px 1px 6px; background: #f0f0f0; border-bottom: 2px solid #dcdcdc; }
.gdot { width: 5px; height: 5px; border: 1.5px solid #2ca02c; border-radius: 50%; background: #d8f0d8; }
.pen { margin-left: 8px; }
.findpill { flex: 1; height: 18px; margin: 0 4px 0 9px; display: flex; align-items: center; gap: 8px; padding-left: 4px; border-radius: 9px; background: linear-gradient(#e6e6e6, #f8f8f8); color: #888; letter-spacing: .5px; }
.findpill .ic { width: 14px; height: 14px; }
.pbody { flex: 1; display: flex; min-height: 0; background: #fcfcfc; }
.side { width: 56px; flex: none; display: flex; flex-direction: column; }
.stab { height: 20px; display: flex; align-items: center; padding-left: 7px; letter-spacing: .4px; }
.stab.on { height: 19px; padding-top: 3px; font-weight: 700; margin: 0 9px 0 2px; padding-left: 5px; border-bottom: 1px solid #c8c8c8; }
.srest { flex: 1; border-right: 1px solid #c8c8c8; padding-top: 2px; }
.pcontent { flex: 1; padding: 22px 19px 0 21px; min-width: 0; }
.srcrow { display: flex; align-items: center; height: 20px; letter-spacing: .6px; }
.srclbl { width: 87px; flex: none; white-space: nowrap; }
.srcinput { width: 270px; height: 19px; background: #ececec; border: 1px solid #777; }
.dots { width: 27px; height: 20px; margin-left: 6px; text-align: center; line-height: 18px; background: linear-gradient(#f4f4f4, #dcdcdc); }
.ptbl { margin-top: 7px; border: 1px solid #c8c8c8; border-bottom: 0; }
.ptbar { height: 20px; display: flex; align-items: center; background: #f4f4f4; padding-right: 3px; border-bottom: 1px solid #c8c8c8; letter-spacing: .3px; gap: 7px; }
.ptname { flex: 1; padding-left: 3px; }
.ptbar .tri { margin-left: -6px; }
.ptbar .pill { margin-left: -2px; }
```
